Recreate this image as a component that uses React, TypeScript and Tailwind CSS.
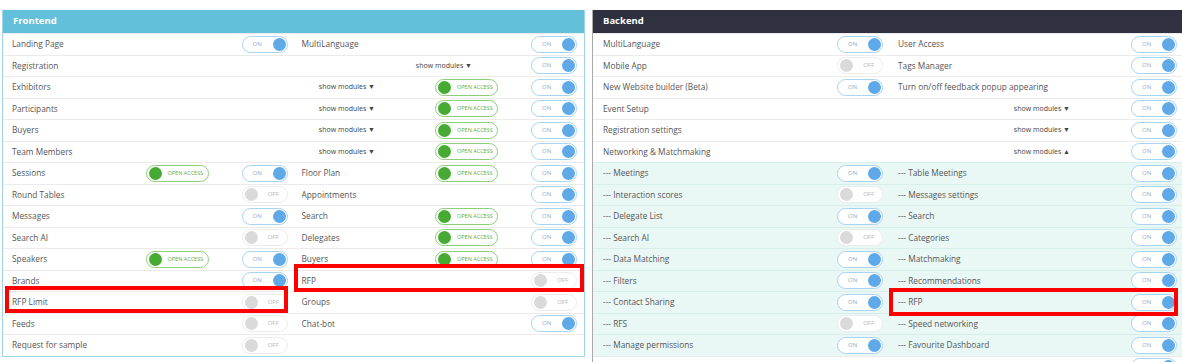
import React from 'react';

type Cell = {
  label: string;
  toggle?: 'on' | 'off';
  open?: boolean;
};

type Row =
  | { kind: 'split'; left: Cell; right?: Cell }
  | { kind: 'full'; label: string; modules: string; open?: boolean; toggle: 'on' | 'off' };

const Toggle: React.FC<{ state: 'on' | 'off' }> = ({ state }) =>
  state === 'on' ? (
    <div className="relative w-[46px] h-[17px] rounded-full border border-[#a9d3f3] bg-white shrink-0">
      <span className="absolute left-[10px] top-[3px] text-[6px] leading-[9px] text-[#9aa9b8]">ON</span>
      <span className="absolute right-[1px] top-[1px] w-[13px] h-[13px] rounded-full bg-[#5fa9e8]" />
    </div>
  ) : (
    <div className="relative w-[46px] h-[17px] rounded-full border border-[#ececec] bg-white shrink-0">
      <span className="absolute left-[2px] top-[1px] w-[13px] h-[13px] rounded-full bg-[#dadada]" />
      <span className="absolute right-[8px] top-[3px] text-[6px] leading-[9px] text-[#b4b4b4]">OFF</span>
    </div>
  );

const OpenAccess: React.FC = () => (
  <div className="relative w-[63px] h-[17px] rounded-full border border-[#8ccf78] bg-white shrink-0">
    <span className="absolute left-[2px] top-[1px] w-[13px] h-[13px] rounded-full bg-[#46aa33]" />
    <span className="absolute left-[21px] top-[3px] text-[5.5px] leading-[9px] text-[#5cae48] whitespace-nowrap">OPEN ACCESS</span>
  </div>
);

const SplitCell: React.FC<{ cell?: Cell; className: string }> = ({ cell, className }) => (
  <div className={`flex items-center min-w-0 ${className}`}>
    {cell && (
      <>
        <span className="flex-1 truncate">{cell.label}</span>
        {cell.open && (
          <div className="mr-[33px]">
            <OpenAccess />
          </div>
        )}
        {cell.toggle && <Toggle state={cell.toggle} />}
      </>
    )}
  </div>
);

const frontendRows: Row[] = [
  { kind: 'split', left: { label: 'Landing Page', toggle: 'on' }, right: { label: 'MultiLanguage', toggle: 'on' } },
  { kind: 'full', label: 'Registration', modules: 'show modules ▼', toggle: 'on' },
  { kind: 'full', label: 'Exhibitors', modules: 'show modules ▼', open: true, toggle: 'on' },
  { kind: 'full', label: 'Participants', modules: 'show modules ▼', open: true, toggle: 'on' },
  { kind: 'full', label: 'Buyers', modules: 'show modules ▼', open: true, toggle: 'on' },
  { kind: 'full', label: 'Team Members', modules: 'show modules ▼', open: true, toggle: 'on' },
  { kind: 'split', left: { label: 'Sessions', open: true, toggle: 'on' }, right: { label: 'Floor Plan', open: true, toggle: 'on' } },
  { kind: 'split', left: { label: 'Round Tables', toggle: 'off' }, right: { label: 'Appointments', toggle: 'on' } },
  { kind: 'split', left: { label: 'Messages', toggle: 'on' }, right: { label: 'Search', open: true, toggle: 'on' } },
  { kind: 'split', left: { label: 'Search AI', toggle: 'off' }, right: { label: 'Delegates', open: true, toggle: 'on' } },
  { kind: 'split', left: { label: 'Speakers', open: true, toggle: 'on' }, right: { label: 'Buyers', open: true, toggle: 'on' } },
  { kind: 'split', left: { label: 'Brands', toggle: 'on' }, right: { label: 'RFP', toggle: 'off' } },
  { kind: 'split', left: { label: 'RFP Limit', toggle: 'off' }, right: { label: 'Groups', toggle: 'off' } },
  { kind: 'split', left: { label: 'Feeds', toggle: 'off' }, right: { label: 'Chat-bot', toggle: 'on' } },
  { kind: 'split', left: { label: 'Request for sample', toggle: 'off' } },
];

const backendTop: Row[] = [
  { kind: 'split', left: { label: 'MultiLanguage', toggle: 'on' }, right: { label: 'User Access', toggle: 'on' } },
  { kind: 'split', left: { label: 'Mobile App', toggle: 'off' }, right: { label: 'Tags Manager', toggle: 'on' } },
  { kind: 'split', left: { label: 'New Website builder (Beta)', toggle: 'on' }, right: { label: 'Turn on/off feedback popup appearing', toggle: 'on' } },
  { kind: 'full', label: 'Event Setup', modules: 'show modules ▼', toggle: 'on' },
  { kind: 'full', label: 'Registration settings', modules: 'show modules ▼', toggle: 'on' },
  { kind: 'full', label: 'Networking & Matchmaking', modules: 'show modules ▲', toggle: 'on' },
];

const networking: [string, 'on' | 'off', string][] = [
  ['Meetings', 'on', 'Table Meetings'],
  ['Interaction scores', 'off', 'Messages settings'],
  ['Delegate List', 'on', 'Search'],
  ['Search AI', 'off', 'Categories'],
  ['Data Matching', 'on', 'Matchmaking'],
  ['Filters', 'on', 'Recommendations'],
  ['Contact Sharing', 'on', 'RFP'],
  ['RFS', 'off', 'Speed networking'],
  ['Manage permissions', 'on', 'Favourite Dashboard'],
];

const FrontendPanel: React.FC = () => (
  <div className="w-[583px] shrink-0 border border-t-0 border-[#9fd5e7] bg-white">
    <div className="h-[23px] bg-[#63c0db] flex items-center pl-[10px] text-white font-bold text-[9.5px]">Frontend</div>
    {frontendRows.map((row, i) =>
      row.kind === 'split' ? (
        <div key={i} className="grid grid-cols-2 h-[21.5px] border-t border-[#ebebeb]">
          <SplitCell cell={row.left} className="pl-[9px] pr-[6px]" />
          <SplitCell cell={row.right} className="pl-[8px] pr-[7px]" />
        </div>
      ) : (
        <div key={i} className="flex items-center h-[21.5px] border-t border-[#ebebeb] pl-[9px] pr-[7px]">
          <span className="flex-1">{row.label}</span>
          <span className={`text-[7px] text-[#444] ${row.open ? 'mr-[60px]' : 'mr-[59px]'}`}>{row.modules}</span>
          {row.open && (
            <div className="mr-[33px]">
              <OpenAccess />
            </div>
          )}
          <Toggle state={row.toggle} />
        </div>
      )
    )}
  </div>
);

const BackendPanel: React.FC = () => (
  <div className="w-[591px] shrink-0 border-l border-[#a9a9a9] bg-white">
    <div className="h-[23px] bg-[#2f3140] flex items-center pl-[10px] text-white font-bold text-[9.5px]">Backend</div>
    {backendTop.map((row, i) =>
      row.kind === 'split' ? (
        <div key={i} className="grid grid-cols-2 h-[21.5px] border-t border-[#ebebeb]">
          <SplitCell cell={row.left} className="pl-[10px] pr-[5px]" />
          <SplitCell cell={row.right} className="pl-[10px] pr-[6px]" />
        </div>
      ) : (
        <div key={i} className="flex items-center h-[21.5px] border-t border-[#ebebeb] pl-[10px] pr-[6px]">
          <span className="flex-1">{row.label}</span>
          <span className="text-[7px] text-[#444] mr-[61px]">{row.modules}</span>
          <Toggle state={row.toggle} />
        </div>
      )
    )}
    {networking.map(([l, s, r]) => (
      <div key={l} className="grid grid-cols-2 h-[21.5px] border-t border-[#d7eeea] bg-[#eaf8f5]">
        <SplitCell cell={{ label: `--- ${l}`, toggle: s }} className="pl-[10px] pr-[5px]" />
        <SplitCell cell={{ label: `--- ${r}`, toggle: 'on' }} className="pl-[10px] pr-[6px]" />
      </div>
    ))}
    <div className="grid grid-cols-2 h-[21.5px] border-t border-[#ebebeb]">
      <SplitCell className="pl-[10px] pr-[5px]" />
      <SplitCell cell={{ label: '', toggle: 'on' }} className="pl-[10px] pr-[6px]" />
    </div>
  </div>
);

export default function App() {
  return (
    <div className="relative w-[1182px] h-[362px] overflow-hidden bg-white text-[8.3px] text-[#555] font-['Open_Sans',sans-serif]">
      <div className="flex items-start gap-[7px] pt-[10px] pl-[2px]">
        <FrontendPanel />
        <BackendPanel />
      </div>
      <div className="absolute left-[5px] top-[286px] w-[283px] h-[27px] border-4 border-[#ff0000]" />
      <div className="absolute left-[294px] top-[264px] w-[290px] h-[28px] border-4 border-[#ff0000]" />
      <div className="absolute left-[889px] top-[288px] w-[289px] h-[28px] border-4 border-[#ff0000]" />
    </div>
  );
}
